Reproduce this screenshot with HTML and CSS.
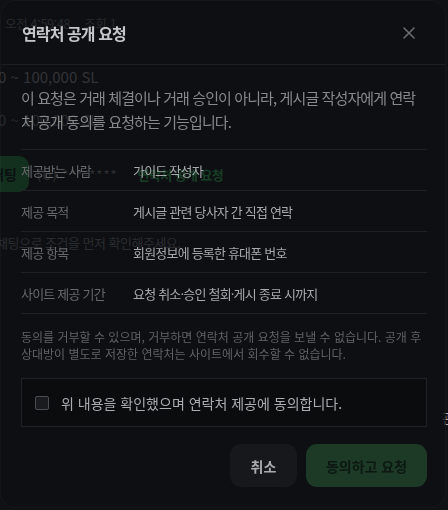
FILE: index.html
```html
<!DOCTYPE html>
<html lang="ko">
<head>
<meta charset="utf-8">
<link rel="stylesheet" href="styles.css">
</head>
<body>
<div class="page">
  <div class="meta"><span>오전 4:59:48</span><span>조회 1</span></div>
  <div class="price">0 ~ 100,000 SL</div>
  <div class="price p2">0 ~ 100,000 SL</div>
  <div class="actions">
    <span class="chat-btn">채팅</span>
    <span class="phone">(U) ***-****</span>
    <span class="req">연락처 공개 요청</span>
  </div>
  <div class="hint">채팅으로 조건을 먼저 확인해주세요.</div>
  <div class="side">관</div>
</div>

<div class="modal" role="dialog">
  <header class="modal-head">
    <h2 class="title">연락처 공개 요청</h2>
    <button class="close" aria-label="닫기">
      <svg width="12" height="12" viewBox="0 0 12 12"><path d="M1 1L11 11M11 1L1 11" stroke="currentColor" stroke-width="1.5" stroke-linecap="round"/></svg>
    </button>
  </header>
  <div class="modal-body">
    <p class="intro">이 요청은 거래 체결이나 거래 승인이 아니라, 게시글 작성자에게 연락처 공개 동의를 요청하는 기능입니다.</p>
    <dl class="info">
      <div class="row"><dt>제공받는 사람</dt><dd>가이드 작성자</dd></div>
      <div class="row"><dt>제공 목적</dt><dd>게시글 관련 당사자 간 직접 연락</dd></div>
      <div class="row"><dt>제공 항목</dt><dd>회원정보에 등록한 휴대폰 번호</dd></div>
      <div class="row"><dt>사이트 제공 기간</dt><dd>요청 취소·승인 철회·게시 종료 시까지</dd></div>
    </dl>
    <p class="note">동의를 거부할 수 있으며, 거부하면 연락처 공개 요청을 보낼 수 없습니다. 공개 후 상대방이 별도로 저장한 연락처는 사이트에서 회수할 수 없습니다.</p>
    <label class="agree"><span class="box"></span><span class="agree-text">위 내용을 확인했으며 연락처 제공에 동의합니다.</span></label>
    <div class="buttons">
      <button class="btn cancel">취소</button>
      <button class="btn ok">동의하고 요청</button>
    </div>
  </div>
</div>
</body>
</html>
```

FILE: styles.css
```css
* { box-sizing: border-box; }
html, body { margin: 0; padding: 0; }
body {
  background: #101114;
  width: 448px;
  height: 510px;
  overflow: hidden;
  font-family: "Noto Sans CJK KR", "Noto Sans", sans-serif;
}

/* background page */
.page {
  padding: 15px 0 0 5px;
  display: flex;
  flex-direction: column;
}
.meta {
  font-size: 12.5px;
  line-height: 18px;
  letter-spacing: -0.3px;
  color: #76787c;
  display: flex;
  gap: 14px;
}
.price {
  margin: 34px 0 0 -7px;
  font-size: 15px;
  line-height: 20px;
  color: #9c9ea2;
}
.price.p2 { margin-top: 23px; color: #74767a; }
.actions {
  margin: 26px 0 0 -26px;
  display: flex;
  align-items: center;
  gap: 8px;
}
.chat-btn {
  height: 36px;
  padding: 0 12px;
  display: flex;
  align-items: center;
  border-radius: 10px;
  background: #26934a;
  color: #04100a;
  font-size: 14px;
  font-weight: 700;
}
.phone { font-size: 13px; letter-spacing: 1px; color: #8a8c90; }
.req { font-size: 13px; font-weight: 700; letter-spacing: -0.6px; color: #38c865; margin-left: 12px; }
.hint {
  margin: 41px 0 0 -9px;
  font-size: 13px;
  line-height: 20px;
  letter-spacing: -0.5px;
  color: #7e8084;
}
.side {
  margin-top: 156px;
  align-self: flex-end;
  margin-right: -6px;
  font-size: 13px;
  line-height: 18px;
  color: #b0b2b6;
}

/* modal */
.modal {
  position: fixed;
  left: 0;
  top: 0;
  width: 446px;
  height: 508px;
  border-radius: 16px;
  background: rgba(14, 15, 18, 0.75);
  border: 1px solid rgba(255, 255, 255, 0.03);
  display: flex;
  flex-direction: column;
}
.modal-head {
  height: 65px;
  padding: 1px 24px 0 21px;
  border-bottom: 1px solid #1d1e22;
  display: flex;
  align-items: center;
  justify-content: space-between;
}
.title {
  margin: 0;
  font-size: 16px;
  font-weight: 700;
  letter-spacing: -0.9px;
  color: #c6c7ca;
}
.close {
  width: 24px;
  height: 24px;
  padding: 0;
  border: 0;
  background: none;
  color: #6d6f73;
  display: flex;
  align-items: center;
  justify-content: center;
}
.modal-body {
  padding: 21px 18px 20px 20px;
  display: flex;
  flex-direction: column;
}
.intro {
  margin: 0;
  font-size: 15px;
  line-height: 24px;
  letter-spacing: -0.9px;
  color: #87898d;
}
.info {
  margin: 15px 0 0;
  border-bottom: 1px solid #1f2024;
}
.row {
  height: 41px;
  border-top: 1px solid #1f2024;
  display: flex;
  align-items: center;
  font-size: 13px;
  letter-spacing: -0.8px;
}
.row dt { width: 112px; color: #66686c; }
.row dd { margin: 0; color: #a7a9ac; }
.note {
  margin: 14px 0 0;
  font-size: 12px;
  line-height: 17px;
  color: #606266;
}
.agree {
  margin-top: 16px;
  height: 49px;
  border: 1px solid #1f2125;
  background: rgba(8, 9, 11, 0.5);
  padding: 0 13px;
  display: flex;
  align-items: center;
  gap: 12px;
}
.box {
  width: 14px;
  height: 14px;
  border: 1px solid #4a4c51;
  border-radius: 2px;
  background: #1a1b1f;
}
.agree-text { font-size: 14px; color: #abadb0; }
.buttons {
  margin-top: 17px;
  display: flex;
  justify-content: flex-end;
  gap: 9px;
}
.btn {
  height: 43px;
  border: 0;
  border-radius: 11px;
  font-family: inherit;
  font-size: 14px;
  font-weight: 700;
}
.cancel { width: 67px; background: #17181b; color: #a9abae; }
.ok { width: 121px; background: #1c3a26; color: #0c1811; }
```
